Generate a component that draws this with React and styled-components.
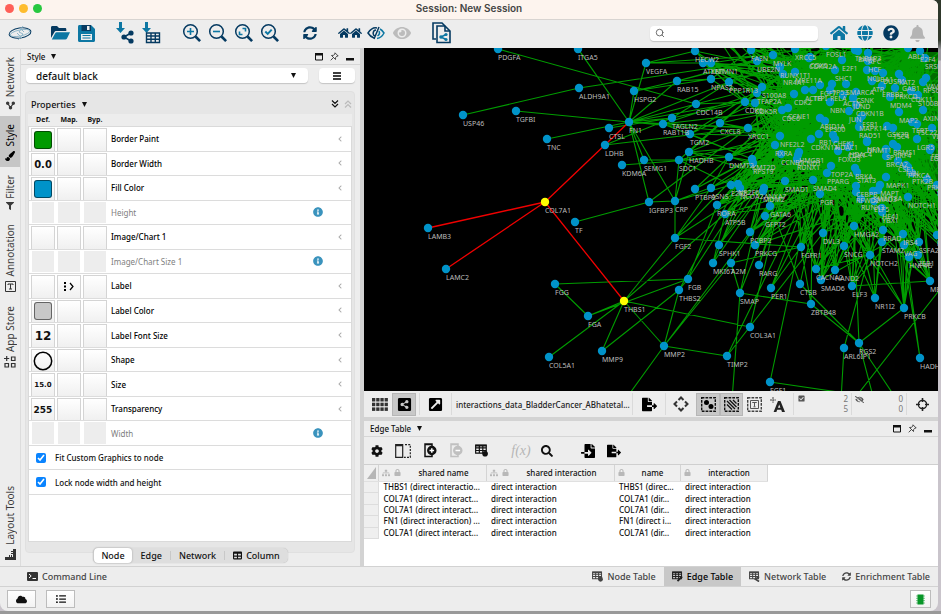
import React from 'react';
import styled, { createGlobalStyle, css } from 'styled-components';
import {
  FaShareAlt, FaTable, FaHome, FaGlobe, FaQuestionCircle, FaBell, FaCloud,
  FaListUl, FaCog, FaEyeSlash, FaEye, FaLock, FaSitemap, FaPaintBrush, FaFilter, FaInfoCircle,
  FaFileExport, FaFileImport, FaSyncAlt, FaShareAltSquare, FaExternalLinkSquareAlt,
  FaCheckSquare, FaSearch, FaChevronLeft,
} from 'react-icons/fa';
import { FiSearch } from 'react-icons/fi';

const NAVY = '#053a61';
const TEAL = '#0d77a3';

const Global = createGlobalStyle`
  * { box-sizing: border-box; }
  body { margin: 0; background: linear-gradient(#2f382b 0 40px, #9c9aa0 50px 60px, #c9c4cb 61px); }
  body, button, input, select { font-family: "Noto Sans", "Open Sans", sans-serif; color: #111; }
  button { border: 0; padding: 0; background: none; display: flex; align-items: center; justify-content: center; }
`;

const Desktop = styled.div`
  height: 100vh;
  padding: 0 3px 3px 0;
  display: flex;
  background: linear-gradient(to top, #999 0 3px, transparent 3px);
`;
const Window = styled.main`
  flex: 1;
  min-width: 0;
  display: flex;
  flex-direction: column;
  background: #ededed;
  border-radius: 0 6px 8px 8px;
  overflow: hidden;
`;
const TitleBar = styled.header`
  height: 20px;
  flex: none;
  display: grid;
  grid-template-columns: 1fr auto 1fr;
  align-items: start;
  background: #fdf4ee;
  border-bottom: 1px solid #d8d4d1;
`;
const Lights = styled.div`
  display: flex;
  gap: 5px;
  padding: 4px 0 0 5px;
`;
const Light = styled.button`
  width: 9px;
  height: 9px;
  border-radius: 50%;
  background: ${(p) => p.$color};
`;
const Title = styled.h1`
  margin: 0;
  font: 600 10px/17px Inter, sans-serif;
  color: #444;
`;
const Toolbar = styled.div`
  height: 28px;
  flex: none;
  display: flex;
  align-items: center;
  gap: 14px;
  padding: 0 8px 2px 7px;
`;
const Group = styled.div`
  display: flex;
`;
const ToolButton = styled.button`
  width: 26px;
  height: 24px;
  color: ${(p) => p.$color || NAVY};
`;
const Search = styled.label`
  display: flex;
  align-items: center;
  width: 168px;
  height: 15px;
  margin-left: auto;
  margin-right: -6px;
  padding: 0 5px;
  border-radius: 4px;
  background: #fff;
  box-shadow: 0 1px 1px #c4c4c4;
  input { flex: 1; min-width: 0; border: 0; outline: 0; background: none; font-size: 9px; height: 13px; }
`;
const Body = styled.div`
  flex: 1;
  min-height: 0;
  display: flex;
`;
const Rail = styled.nav`
  width: 21px;
  flex: none;
  display: flex;
  flex-direction: column;
  border-top: 1px solid #d9d9d9;
  border-right: 1px solid #dcdcdc;
`;
const RailTab = styled.button`
  flex-direction: column-reverse;
  gap: 4px;
  padding: 8px 0 6px;
  font-size: 10px;
  line-height: 14px;
  color: ${(p) => (p.$on ? '#000' : '#3a3a3a')};
  background: ${(p) => (p.$on ? '#c6c6c6' : 'transparent')};
  margin-top: ${(p) => (p.$last ? 'auto' : 0)};
  span { writing-mode: vertical-rl; transform: rotate(180deg); }
`;
const UprightShare = styled(FaShareAlt)`
  transform: rotate(-90deg);
`;
const StylePanel = styled.section`
  width: 339px;
  flex: none;
  display: flex;
  flex-direction: column;
  border-top: 1px solid #d9d9d9;
  padding-bottom: 3px;
`;
const PanelHeader = styled.div`
  height: 16px;
  flex: none;
  display: flex;
  align-items: center;
  gap: 7px;
  padding: 0 6px;
  border-bottom: 1px solid #d6d6d6;
  font-size: 8px;
  font-weight: 500;
  button { gap: 6px; font: inherit; }
  > :first-child { margin-right: auto; }
`;
const Splitter = styled.div`
  flex: none;
  width: 4px;
  background: #d3d3d3;
`;
const StyleRow = styled.div`
  display: flex;
  gap: 11px;
  padding: 3px 5px 8px;
`;
const SelectWrap = styled.label`
  position: relative;
  flex: 1;
  display: flex;
  svg { position: absolute; right: 12px; top: 5px; pointer-events: none; }
`;
const StyleSelect = styled.select`
  appearance: none;
  width: 100%;
  height: 15px;
  border: 0;
  padding: 0 10px;
  border-radius: 4px;
  background: #fff;
  box-shadow: 0 1px 1px #c4c4c4;
  font-size: 10px;
  font-weight: 500;
  line-height: 14px;
`;
const MenuButton = styled.button`
  width: 36px;
  height: 15px;
  border-radius: 4px;
  background: #fff;
  box-shadow: 0 1px 1px #c4c4c4;
`;
const Properties = styled.div`
  flex: 1;
  min-height: 0;
  display: flex;
  flex-direction: column;
  margin: 0 5px 0 4px;
  padding: 0 2px 10px;
  border: 1px solid #e0e0e0;
  border-radius: 4px;
  background: #e6e6e6;
`;
const PropertiesTitle = styled.div`
  height: 22px;
  display: flex;
  align-items: center;
  justify-content: space-between;
  padding: 2px 0 0 3px;
  button { gap: 6px; font-size: 9px; font-weight: 500; }
  > div { display: flex; gap: 5px; }
`;
const ColumnHeads = styled.div`
  height: 12px;
  display: grid;
  grid-template-columns: 26px 26px 26px;
  justify-items: center;
  padding-left: 2px;
  background: #ededed;
  font-size: 7px;
  line-height: 11px;
  font-weight: 700;
`;
const PropertyList = styled.div`
  flex: 1;
  min-height: 0;
  display: grid;
  grid-template-rows: repeat(15, minmax(0, 1fr)) 46px;
  background: #fff;
  border: 1px solid #dadada;
`;
const PropertyRow = styled.div`
  display: grid;
  grid-template-columns: 24px 24px 24px 1fr 22px 14px;
  column-gap: 2px;
  align-items: center;
  padding-left: 2px;
  border-bottom: 1px solid #dcdcdc;
  font-size: 8px;
  font-weight: ${(p) => (p.$off ? 400 : 500)};
  color: ${(p) => (p.$off ? '#808080' : '#000')};
  > span { padding-left: 2px; }
`;
const Cell = styled.button`
  align-self: stretch;
  margin-top: 1px;
  font-family: "DejaVu Sans", sans-serif;
  font-weight: 700;
  font-size: ${(p) => p.$size || 10}px;
  ${(p) => (p.$off
    ? css`background: #ededed; margin: 1px;`
    : css`background: linear-gradient(#fff, #f0f0f0); border: 1px solid #d4d4d4; border-bottom: 0;`)}
`;
const Swatch = styled.i`
  width: 18px;
  height: 18px;
  border-radius: 3px;
  border: 1px solid rgba(0, 0, 0, 0.5);
  background: ${(p) => p.$color};
`;
const Ring = () => (
  <svg width="20" height="20" viewBox="0 0 20 20"><circle cx="10" cy="10" r="8.700" fill="none" stroke="#000" strokeWidth="1.500" /></svg>
);
const CheckRow = styled.label`
  display: flex;
  align-items: center;
  gap: 9px;
  padding-left: 7px;
  border-bottom: 1px solid #dcdcdc;
  font-size: 8px;
  font-weight: 500;
  input { width: 10px; height: 10px; margin: 0; accent-color: #0a84ff; }
`;
const Segments = styled.div`
  align-self: center;
  display: flex;
  align-items: center;
  height: 15px;
  margin-top: -5px;
  border-radius: 5px;
  background: #dedede;
  box-shadow: 0 0 1px #aaa;
`;
const Divider = styled.i`
  width: 1px;
  height: 9px;
  background: #c8c8c8;
`;
const Segment = styled.button`
  gap: 4px;
  padding: 0 7px;
  margin: 0 1px;
  font-size: 9px;
  line-height: 15px;
  font-weight: 500;
  border-radius: 4px;
  background: ${(p) => (p.$on ? '#fff' : 'none')};
  box-shadow: ${(p) => (p.$on ? '0 0 2px #999' : 'none')};
`;
const Main = styled.div`
  flex: 1;
  min-width: 0;
  display: flex;
  flex-direction: column;
`;
const Canvas = styled.svg`
  flex: 1;
  width: 100%;
  min-height: 0;
  display: block;
  background: #000;
  font-family: "Noto Sans", sans-serif;
  font-size: 7px;
  fill: #bcbcbc;
`;
const NetBar = styled.div`
  height: 26px;
  flex: none;
  display: flex;
  align-items: center;
  padding-left: 4px;
  color: #222;
`;
const NetButton = styled.button`
  width: ${(p) => p.$w || 24}px;
  height: 23px;
  margin-left: ${(p) => p.$gap || 0}px;
  color: #222;
  background: ${(p) => (p.$on ? '#c8c8c8' : 'none')};
  border: ${(p) => (p.$on ? '1px solid #b6b6b6' : '0')};
`;
const Sep = styled.i`
  width: 1px;
  height: 22px;
  margin: 0 ${(p) => p.$gap ?? 4}px;
  background: #dadada;
`;
const NetName = styled.span`
  width: 176px;
  font-size: 8px;
  font-weight: 500;
  white-space: nowrap;
`;
const Counter = styled.div`
  display: flex;
  width: ${(p) => p.$w}px;
  justify-content: space-between;
  font-size: 8px;
  line-height: 10px;
  color: #777;
  text-align: right;
  svg { margin-top: 1px; color: #555; }
`;
const TablePanel = styled.section`
  height: 149px;
  flex: none;
  display: flex;
  flex-direction: column;
  border-top: 4px solid #d3d3d3;
`;
const TableTools = styled.div`
  height: 28px;
  flex: none;
  display: flex;
  align-items: center;
  border-bottom: 1px solid #cfcfcf;
`;
const TableArea = styled.div`
  flex: 1;
  background: #fff;
  overflow: hidden;
`;
const Grid = styled.table`
  width: 403px;
  height: 74px;
  table-layout: fixed;
  border-collapse: collapse;
  font-size: 8px;
  line-height: 10px;
  th, td { padding: 0 0 0 5px; text-align: left; white-space: nowrap; font-weight: 500; overflow: hidden; }
  thead th { height: 16px; background: #efefef; border-right: 1px solid #d4d4d4; border-bottom: 1px solid #e0e0e0; padding: 0 3px; }
  tbody td:first-child { background: #efefef; border-bottom: 1px solid #ddd; border-right: 1px solid #ddd; }
`;
const Head = styled.div`
  display: flex;
  align-items: center;
  gap: 4px;
  span { flex: 1; text-align: center; }
  svg { color: #b8b8b8; }
`;
const Tabs = styled.nav`
  height: 21px;
  flex: none;
  display: flex;
  border-top: 1px solid #d2d2d2;
  border-bottom: 1px solid #d2d2d2;
  > :first-child { margin-right: auto; margin-left: 19px; }
`;
const Tab = styled.button`
  gap: 4px;
  padding: 0 8px;
  font-size: 9px;
  font-weight: 500;
  color: ${(p) => (p.$on ? '#000' : '#444')};
  background: ${(p) => (p.$on ? '#c8c8c8' : 'none')};
`;
const Status = styled.footer`
  height: 24px;
  flex: none;
  display: flex;
  align-items: center;
  gap: 10px;
  padding: 0 7px;
  > :last-child { margin-left: auto; width: 21px; }
`;
const StatusButton = styled.button`
  width: 29px;
  height: 18px;
  border: 1px solid #bcbcbc;
  background: linear-gradient(#fff, #f3f3f3);
`;

/* ---------- icons ---------- */
const Logo = () => (
  <svg width="24" height="16" viewBox="0 0 24 16" fill="none">
    <ellipse cx="12" cy="8" rx="11" ry="5" transform="rotate(-8 12 8)" stroke={NAVY} />
    <ellipse cx="12" cy="8" rx="10" ry="3" transform="rotate(-12 12 8)" stroke="#6fa3bd" strokeWidth=".7" />
    <path d="M15 1l-4 6 4 2-5 6M12 3l4 4M9 8l5 5" stroke="#8fb6c9" strokeWidth="1" />
  </svg>
);
const FolderIcon = () => (
  <svg width="19" height="16" viewBox="0 0 19 16">
    <path d="M0 13V2.500C0 1.500.6 1 1.500 1H6l2 2h6c.8 0 1.300.5 1.300 1.300V6H5.500C4.400 6 3.700 6.500 3.200 7.400z" fill={NAVY} />
    <path d="M5.800 7.200H19l-3 6.200c-.4.7-.9 1.100-1.700 1.100H.8L4 8.400c.4-.8 1-1.200 1.800-1.200z" fill={TEAL} />
  </svg>
);
const SaveIcon = () => (
  <svg width="17" height="17" viewBox="0 0 17 17">
    <path d="M1.500 0H13l4 4v11.500c0 .9-.6 1.500-1.500 1.500h-14C.6 17 0 16.400 0 15.500v-14C0 .6.6 0 1.500 0z" fill={TEAL} />
    <path d="M3.500 0H13v6H3.500z" fill={NAVY} />
    <path d="M9 1h2.500v4H9zM3 9h11v6H3z" fill="#ededed" />
    <path d="M4.500 10.500h8M4.500 13h8" stroke={TEAL} />
  </svg>
);
const Zoom = ({ children }) => (
  <svg width="20" height="20" viewBox="0 0 20 20" fill="none" stroke={NAVY}>
    <circle cx="8.5" cy="8.5" r="6.8" strokeWidth="1.5" />
    <path d="M13.5 13.5l4.6 4.6" strokeWidth="2.6" />
    <g stroke={TEAL} strokeWidth="1.6">{children}</g>
  </svg>
);
const ImportIcon = ({ children }) => (
  <svg width="22" height="22" viewBox="0 0 22 22">
    <path d="M4 0h3v6h3L5.500 11 1 6h3z" fill={TEAL} />
    {children}
  </svg>
);
const Docs = () => (
  <svg width="20" height="22" viewBox="0 0 20 22" fill="#ededed" stroke={NAVY} strokeWidth="1.6">
    <path d="M4 17H1V1h9l3 3" />
    <path d="M5 4h8l5 5v11.500H5z" />
    <path d="M13 4v5h5" fill="none" />
    <path d="M9 15l5-2.500M9 15l5 2.500" stroke={TEAL} />
    <g fill={TEAL} stroke="none"><circle cx="9" cy="15" r="1.800" /><circle cx="14" cy="12.500" r="1.600" /><circle cx="14" cy="17.500" r="1.600" /></g>
  </svg>
);
const HalfEye = () => (
  <svg width="18" height="14" viewBox="0 0 18 14" fill="none" stroke={NAVY} strokeWidth="1.500">
    <path d="M10 2C6 1 3 4 1 7c1.500 2.500 3 4 6 5M12 1L7 13M9 4C6 4 5 9 8 10" />
    <path d="M13 3c2 1 3 2.500 4 4-1.500 3-4 5-7 5.500M12 5c1 2 0 4-1.500 5" stroke={TEAL} />
  </svg>
);
const Caret = ({ size = 5 }) => (
  <svg width={size} height={size} viewBox="0 0 6 6"><path d="M0 0h6L3 6z" fill="#111" /></svg>
);
const MenuIcon = () => (
  <svg width="8" height="8" viewBox="0 0 8 8"><path d="M0 1h8M0 4h8M0 7h8" stroke="#000" strokeWidth="1.600" /></svg>
);
const MaxIcon = () => (
  <svg width="8" height="8" viewBox="0 0 8 8"><path d="M.5 1v6h7V1z" fill="none" stroke="#111" /><path d="M0 0h8v2.500H0z" fill="#111" /></svg>
);
const PinIcon = () => (
  <svg width="9" height="9" viewBox="0 0 9 9" fill="none" stroke="#222" strokeWidth=".8"><path d="M5 .8L8.200 4 6.800 4.200 5.600 5.600 5.500 7.500 1.500 3.500 3.400 3.300 4.800 2.200zM3.300 5.700L.7 8.300" /></svg>
);
const MinIcon = () => (
  <svg width="8" height="8" viewBox="0 0 8 8"><path d="M0 5h8v2.500H0z" fill="#111" /></svg>
);
const PanelButtons = () => (
  <>
    <button aria-label="Float"><MaxIcon /></button>
    <button aria-label="Pin"><PinIcon /></button>
    <button aria-label="Minimize"><MinIcon /></button>
  </>
);
const DoubleChevron = ({ up, color }) => (
  <svg width="8" height="8" viewBox="0 0 8 8" fill="none" stroke={color} strokeWidth="1.200">
    <path d={up ? 'M1 4l3-3 3 3M1 7.500l3-3 3 3' : 'M1 .5l3 3 3-3M1 4l3 3 3-3'} />
  </svg>
);
const AnnotIcon = () => (
  <svg width="11" height="11" viewBox="0 0 11 11" fill="none" stroke="#333"><path d="M.5.5h10v10H.5zM3 4V3h5v1M5.500 3v5M4 8h3" /></svg>
);
const AppsIcon = () => (
  <svg width="12" height="12" viewBox="0 0 12 12" fill="none" stroke="#333" strokeWidth="1.200"><path d="M1 7.500h3.500V11H1zM7.500 7.500H11V11H7.500zM7.500 1H11v3.500H7.500zM2.700 0v5M0 2.500h5.200" /></svg>
);
const RulerIcon = () => (
  <svg width="11" height="11" viewBox="0 0 11 11" fill="#333"><path d="M0 8h8V0h3v11H0zM4 6h1v2H4zM6 6h1v2H6zM6 2h2v1H6zM6 4h2v1H6z" /></svg>
);
const MapIcon = () => (
  <svg width="10" height="9" viewBox="0 0 10 9"><path d="M0 0h2v2H0zM0 3.500h2v2H0zM0 7h2v2H0z" /><path d="M6 1l3 3.500L6 8" fill="none" stroke="#000" strokeWidth="1.200" /></svg>
);
const GridIcon = () => (
  <svg width="16" height="13" viewBox="0 0 16 13" fill="#333">
    {[0, 1, 2].flatMap((r) => [0, 1, 2, 3].map((c) => <rect key={`${r}${c}`} x={c * 4.200} y={r * 4.700} width="3.300" height="3.500" />))}
  </svg>
);
const Dashed = ({ children, color = '#111' }) => (
  <svg width="15" height="15" viewBox="0 0 15 15">
    <rect x=".7" y=".7" width="13.600" height="13.600" fill="none" stroke={color} strokeWidth="1.400" strokeDasharray="2.700 1.100" />
    {children}
  </svg>
);
const CrossIcon = () => (
  <svg width="16" height="16" viewBox="0 0 16 16" fill="none" stroke="#333" strokeWidth="2"><path d="M5.500 4L8 1.500 10.500 4M5.500 12L8 14.500l2.500-2.500M4 5.500L1.500 8 4 10.500M12 5.500L14.500 8 12 10.500" /></svg>
);
const TargetIcon = () => (
  <svg width="13" height="13" viewBox="0 0 13 13" fill="none" stroke="#222" strokeWidth="1.200"><circle cx="6.500" cy="6.500" r="4.200" /><path d="M6.500 0v4M6.500 9v4M0 6.500h4M9 6.500h4" strokeWidth="1.600" /></svg>
);
const MoveA = () => (
  <svg width="15" height="15" viewBox="0 0 15 15" fill="#222"><path d="M3 0v6M0 3h6" stroke="#444" strokeDasharray="2 .6" /><path fillRule="evenodd" d="M8 4h2.500L15 15h-3l-.8-2.200H7.200L6.400 15H3.600zM9.200 7.500L8 10.800h2.400z" /></svg>
);
const SplitIcon = () => (
  <svg width="16" height="14" viewBox="0 0 16 14" fill="none" stroke="#222"><path d="M.7.7h7v12.600h-7z" strokeWidth="1.200" /><path d="M.7 1.500h7" strokeWidth="1.500" /><path d="M10 .7h5.300v12.600H9" strokeDasharray="2 1.200" strokeWidth="1.200" /></svg>
);
const ColumnIcon = ({ minus, color = '#111' }) => (
  <svg width="14" height="15" viewBox="0 0 14 15" fill="none" stroke={color} strokeWidth="1.500">
    <path d="M9 3V1H2v12.500h7V12M2 1.500h7" /><circle cx="8.800" cy="7.500" r="4" fill={color} />
    <path d={minus ? 'M6.500 7.500h4.600' : 'M6.500 7.500h4.600M8.800 5.200v4.600'} stroke="#fff" />
  </svg>
);
const TableX = ({ size = 11, color = '#222', mark }) => (
  <svg width={size} height={size} viewBox="0 0 12 12" fill="none" stroke={color}>
    <path d="M.6 1h9.800v7.500H.6zM.6 3.500h9.800M.6 6h9.800M4 1v7.500M7.200 1v7.500" strokeWidth="1.100" />
    <path d="M.5 1.500h10" strokeWidth="1.600" />
    {mark === 'dot' && <circle cx="9.300" cy="9" r="2.600" fill={color} stroke="none" />}
    {mark === 'line' && <path d="M6 11l5-5" strokeWidth="2" />}
    {mark === 'net' && <path d="M11 6L7 9l4 2.500" strokeWidth="1.800" />}
  </svg>
);
const TerminalIcon = () => (
  <svg width="11" height="9" viewBox="0 0 11 9"><rect width="11" height="9" rx="1" fill="#333" /><path d="M2 2l2.200 2L2 6M5.500 6.500H9" fill="none" stroke="#fff" /></svg>
);
const Chip = () => (
  <svg width="9" height="11" viewBox="0 0 9 11"><path d="M0 2h9M0 4.300h9M0 6.600h9M0 9h9" stroke="#7cc48c" /><rect x="1.500" y=".5" width="6" height="10" fill="#079628" /></svg>
);
const Formula = styled.em`
  font: italic 14px/16px "Liberation Serif", serif;
  color: #b5b5b5;
`;

/* ---------- network ---------- */
const ORIGIN = { x: 364, y: 48 };
const parse = (s) => s.trim().split(/\s+/).map((t) => {
  const [name, x, y] = t.split(',');
  return { name, x: +x, y: +y };
});
const OUTER = parse(`PDGFA,498,49 ITGA5,578,49 ALDH9A1,579,88 USP46,463,115 TGFBI,516,111 VEGFA,646,63 RAB15,677,81
HSPG2,634,91 NPAS2,711,79 CDC14B,696,104 TAGLN2,672,118 RAB11B,663,124 FN1,629,122 PPP1R13,729,82 HECW2,695,51
TNC,547,139 CTSL,609,128 LDHB,605,145 KDM6A,622,165 SEMG1,644,160 COL7A1,545,202 TF,575,222 LAMB3,428,228
LAMC2,446,269 FGG,555,284 FGA,588,316 THBS1,624,301 COL5A1,549,357 MMP9,602,351 MKI67,713,263 A2M,731,263
RARG,759,265 FGB,688,279 THBS2,679,290 SMAP,740,293 PER1,771,288 CTSB,800,284 ZBTB48,811,304 COL3A1,750,327
MMP2,664,346 TIMP2,727,356 FGF1,770,382 ARL6IP1,844,348 RGS2,859,343 HADH,920,358 TGM2,690,134 CXCL8,720,123
HADHB,689,152 SDC1,679,160 IGFBP3,649,202 CRP,675,201 FGF2,675,238 SPHK1,719,245 PTBP2,695,189 ASNS,711,188`);
const MIDDLE = parse(`ATXN1,703,63 LETMN1,711,63 FASN,751,50 MYLK,773,55 UBE2N,757,61 XRCC1,748,128 DNMT2,729,157 KMT2D,752,159
RPS19,753,163 RORA,717,205 ATP5B,725,214 E2F2,731,185 NR2F6,738,184 NCOA2,740,188 MDM2,763,191 ANXA7,764,188
GATA6,770,206 GFPT2,765,216 PCBP2,750,232 PRKCG,755,245 FGFR1,801,247 DVL3,823,233 PGR,820,194 SMAD1,785,181
SMAD4,813,180 HMGA2,854,226 SNCG,844,246 NOTCH2,870,255 RRAD,883,230 STAM2,882,242 IRS4,903,234 VAG,904,245
SSFA2,919,242 HNF4G,909,257 ZEB1,918,255 CACNA2,816,269 SMAD6,821,280 HAND2,835,270 ELF3,852,286 NR1I2,875,298
PRKCB,904,308 MED4,930,281 NOTCH1,908,197 HE41,882,208 YBX1,882,212 CDK6,745,102 S100A8,762,87 TFAP2A,757,93
RUNX3,861,199 ELF5,874,201 PER2,937,235`);
const CORE = parse(`RUNX1T1,780,67 NR4A1,783,74 MRE11A,795,72 XRCC5,795,49 COX5,810,57 CDKN2A,809,58 FOSL1,826,46 E2F1,842,60
SHC1,835,70 THRAP3,855,50 APC,868,53 HCF,868,61 BAP1,858,51 NCL,867,70 UBA1,875,71 DUSP1,883,73 KAT2,899,74 ABL1,908,48
E2F4,920,51 SRSF,925,58 VAV,926,78 RPS6,923,82 ATR,872,81 ERBB2,882,86 GAB1,902,80 PRKCD,895,88 CDK11,911,91
S100B,918,95 MDM4,890,97 MAP2,899,112 AXIN,923,110 CDK2,794,94 ACTB,805,90 TFPI,813,90 FGF7,820,85 TP53,832,84
RELA,830,90 SMARCA,846,84 CSNK,856,92 ACTN,843,95 JUND,853,98 CDKN1B,856,105 NBN,830,102 CDC6,782,110 CCNE1,788,108 CDK5R,755,103
JUN,849,111 ESR1,862,116 ARID1A,820,118 EP300,825,121 MAPK14,859,120 GSK3B,887,126 TERT,912,122 TSC22,917,124
VIM,932,128 TSC4,893,128 NFE2L2,780,136 RXRA,775,145 CDKN1A,811,139 RB1,819,134 CHEK1,833,135 HDAC1,835,139 RAD51,859,127
CDK1,848,147 NF1,867,141 DNMT1,867,142 BRMS1,893,144 SP1,886,149 IRF4,897,147 LGR5,917,139 LGALS,930,150 CCND1,798,155
CCNB1,781,154 FOXO3,838,151 HDAC4,849,146 RUNX1,797,159 HMGB1,799,152 TOP2A,831,166 PPARG,827,173 BRKA,855,168 STAT3,857,172
BRCA2,886,156 CSF1,898,161 PRKCA,908,167 FYN,906,165 PTK2B,912,173 CEBPB,856,186 RFWD2,856,192 MAPK1,886,177 MAPT,880,185
WNT8A,878,190 SMAD3,873,191 PRKG1,927,179 FBXW7,931,148 NOTCH3,937,185`);
const NODES = [...OUTER, ...MIDDLE, ...CORE];
const byName = Object.fromEntries(NODES.map((n) => [n.name, n]));

const LINKS = `USP46-ALDH9A1 ALDH9A1-UBE2N TGFBI-FN1 PDGFA-CDC14B ITGA5-FN1 TNC-FN1 LDHB-XRCC1 CTSL-TAGLN2 KDM6A-DNMT2
FN1-IGFBP3 FN1-SEMG1 FN1-HSPG2 FN1-CRP TF-IGFBP3 VEGFA-HECW2 VEGFA-MYLK FGG-FGB FGG-FGA FGA-THBS1 FGA-FGB COL5A1-THBS1 MMP9-THBS1
MMP9-THBS2 THBS1-FGF2 THBS1-COL3A1 THBS1-MMP2 MMP2-TIMP2 MMP2-THBS2 MMP2-A2M SMAP-ZBTB48 SMAP-A2M SMAP-MDM2
FGB-THBS2 FGB-RORA MKI67-ATP5B A2M-FGFR1 FGF2-CRP FGF2-ASNS FGF2-FGFR1 CRP-SDC1 CRP-E2F2 SDC1-CXCL8 SEMG1-SDC1 SDC1-DNMT2
RGS2-PRKCB RGS2-CTSB RGS2-ZBTB48 ARL6IP1-HE41 HADH-IRS4 FN1-TAGLN2 FN1-RAB11B FN1-VEGFA FN1-PPP1R13 FN1-CDC14B
TGM2-CDK5R HADHB-XRCC1 RAB11B-CDC6 TAGLN2-CDK6 RAB15-NPAS2 HSPG2-RAB15 CXCL8-S100A8 SPHK1-MDM2 RARG-SMAD1
PER1-FGFR1 CTSB-ANXA7 COL3A1-SMAD1 TIMP2-SMAD4 FGF1-SMAD4 PTBP2-KMT2D ASNS-RXRA LDHB-TAGLN2 RGS2-HMGA2
CDC14B-S100A8 CDC14B-CDK6 NPAS2-FASN RAB15-MYLK HADHB-RXRA TGM2-NFE2L2 SDC1-NFE2L2 RAB11B-TFAP2A
THBS2-KMT2D FGB-RXRA MKI67-RPS19 MKI67-MDM2 THBS1-ATP5B MMP2-PCBP2 TIMP2-DVL3 SMAP-SMAD1 PER1-PGR PER1-SMAD4 CTSB-PGR
ZBTB48-SMAD4 ZBTB48-FGFR1 SPHK1-RXRA SPHK1-CCNB1 FGF2-KMT2D A2M-SMAD1 RARG-CCND1 CRP-HADHB IGFBP3-CRP
RAB15-UBE2N VEGFA-ATXN1 HECW2-MRE11A HECW2-CDK6 NPAS2-MRE11A PPP1R13-CDK2 PPP1R13-RUNX1T1 NPAS2-CDK6 CXCL8-NFE2L2
CXCL8-CDC6 CXCL8-CDKN1A TGM2-S100A8 TAGLN2-MYLK HADHB-CDK6 PTBP2-RXRA PTBP2-DNMT2 ASNS-DNMT2 ASNS-CCNB1 HADHB-DNMT2
HADHB-SMAD1 DNMT2-SMAD4 RAB11B-KMT2D TGM2-KMT2D RAB11B-XRCC1 XRCC1-CDKN1A HECW2-TFAP2A ATXN1-CDC6 LETMN1-CCNE1
CRP-CCND1 FGF2-RUNX1 IGFBP3-XRCC1 HSPG2-NPAS2 SDC1-E2F2 FN1-NFE2L2 FN1-ACTB FN1-RAB15 ELF3-MED4 SMAD6-IRS4 CACNA2-NOTCH2`
  .trim().split(/\s+/).map((l) => l.split('-').map((n) => byName[n]));
const RAYS = [[565, 30, 629, 122], [664, 346, 625, 400], [740, 293, 732, 400], [770, 382, 845, 393], [844, 348, 841, 400],
  [859, 343, 874, 400], [859, 343, 897, 400], [858, 394, 945, 283], [629, 122, 760, 128], [920, 358, 901, 240]];
const SELECTED = [['COL7A1', 'FN1'], ['COL7A1', 'LAMB3'], ['COL7A1', 'LAMC2'], ['COL7A1', 'THBS1']];
const HIGHLIGHTED = new Set(['COL7A1', 'THBS1']);

const seeded = (seed) => () => {
  seed = (seed * 1664525 + 1013904223) % 4294967296;
  return seed / 4294967296;
};
const rand = seeded(17);
const pick = (list) => list[Math.floor(rand() * list.length)];
const DENSE = [];
MIDDLE.forEach((n) => { for (let i = 0; i < 9; i += 1) DENSE.push([n, pick(CORE)]); });
CORE.forEach((n) => { for (let i = 0; i < 12; i += 1) DENSE.push([n, pick(CORE)]); });
for (let i = 0; i < 60; i += 1) DENSE.push([{ x: 690 + rand() * 250, y: 30 }, pick(CORE)]);
for (let i = 0; i < 110; i += 1) DENSE.push([{ x: 945, y: 40 + rand() * 210 }, pick(CORE)]);
const line = (a, b) => `M${Math.round(a.x)} ${Math.round(a.y)}L${Math.round(b.x)} ${Math.round(b.y)}`;
const edgePath = [...LINKS, ...DENSE].map(([a, b]) => line(a, b)).join('')
  + RAYS.map(([a, b, c, d]) => `M${a} ${b}L${c} ${d}`).join('');
const redPath = SELECTED.map(([a, b]) => line(byName[a], byName[b])).join('');

const Network = () => (
  <Canvas role="img" aria-label="Interaction network">
    <g transform={`translate(${-ORIGIN.x} ${-ORIGIN.y})`}>
      <path d="M815 75L850 52H940V185L890 170 840 155 812 125z" fill="#009900" opacity=".7" />
      <path d={edgePath} stroke="#009c00" strokeWidth="1.100" fill="none" />
      <path d={redPath} stroke="#f00000" strokeWidth="1.300" fill="none" />
      {NODES.map((n) => (
        <circle key={n.name} cx={n.x} cy={n.y} r="4.200" fill={HIGHLIGHTED.has(n.name) ? '#ffff00' : '#0093c9'} />
      ))}
      {NODES.map((n) => <text key={n.name} x={n.x} y={n.y + 11}>{n.name}</text>)}
    </g>
  </Canvas>
);

/* ---------- data ---------- */
const PROPERTIES = [
  { label: 'Border Paint', swatch: '#009a00' },
  { label: 'Border Width', value: '0.0', size: 10 },
  { label: 'Fill Color', swatch: '#0093c9' },
  { label: 'Height', off: true },
  { label: 'Image/Chart 1' },
  { label: 'Image/Chart Size 1', off: true },
  { label: 'Label', mapped: true },
  { label: 'Label Color', swatch: '#c8c8c8' },
  { label: 'Label Font Size', value: '12', size: 12 },
  { label: 'Shape', ring: true },
  { label: 'Size', value: '15.0', size: 7 },
  { label: 'Transparency', value: '255', size: 9 },
  { label: 'Width', off: true },
];
const ROWS = [
  ['THBS1 (direct interactio...', 'THBS1 (direc...'],
  ['COL7A1 (direct interact...', 'COL7A1 (dir...'],
  ['COL7A1 (direct interact...', 'COL7A1 (dir...'],
  ['FN1 (direct interaction) ...', 'FN1 (direct i...'],
  ['COL7A1 (direct interact...', 'COL7A1 (dir...'],
];
const HEADS = [['shared name', true], ['shared interaction', true], ['name', false], ['interaction', false]];

const Property = ({ p }) => (
  <PropertyRow $off={p.off}>
    <Cell $off={p.off} $size={p.size} aria-label={`${p.label} default`}>
      {p.swatch && <Swatch $color={p.swatch} />}
      {p.ring && <Ring />}
      {p.value}
    </Cell>
    <Cell $off={p.off} aria-label={`${p.label} mapping`}>{p.mapped && <MapIcon />}</Cell>
    <Cell $off={p.off} aria-label={`${p.label} bypass`} />
    <span>{p.label}</span>
    {p.off ? <FaInfoCircle size={10} color="#3a93bd" /> : <i />}
    {!p.off && <FaChevronLeft size={6} color="#aaa" />}
  </PropertyRow>
);

export default function App() {
  return (
    <Desktop>
      <Global />
      <Window>
        <TitleBar>
          <Lights>
            <Light $color="#ff5f57" aria-label="Close" />
            <Light $color="#febc2e" aria-label="Minimize window" />
            <Light $color="#28c840" aria-label="Zoom window" />
          </Lights>
          <Title>Session: New Session</Title>
        </TitleBar>
        <Toolbar>
          <ToolButton aria-label="Home page"><Logo /></ToolButton>
          <Group>
            <ToolButton aria-label="Open"><FolderIcon /></ToolButton>
            <ToolButton aria-label="Save"><SaveIcon /></ToolButton>
          </Group>
          <Group>
            <ToolButton aria-label="Import network">
              <ImportIcon><g fill={NAVY}><circle cx="9" cy="15" r="2.600" /><circle cx="16" cy="11" r="2.600" /><circle cx="16" cy="19" r="2.600" /><path d="M16 11L9 15l7 4" fill="none" stroke={NAVY} strokeWidth="1.600" /></g></ImportIcon>
            </ToolButton>
            <ToolButton aria-label="Import table">
              <ImportIcon><path d="M5.500 11h13v9.500h-13zM5.500 14h13M5.500 17.200h13M10 11v9.500M14.300 11v9.500" fill="none" stroke={NAVY} strokeWidth="1.400" /></ImportIcon>
            </ToolButton>
          </Group>
          <Group>
            <ToolButton aria-label="Zoom in"><Zoom><path d="M5 8.500h7M8.500 5v7" /></Zoom></ToolButton>
            <ToolButton aria-label="Zoom out"><Zoom><path d="M5 8.500h7" /></Zoom></ToolButton>
            <ToolButton aria-label="Fit"><Zoom><path d="M8.500 5.500h3v3M8.500 11.500h-3v-3" /></Zoom></ToolButton>
            <ToolButton aria-label="Zoom selected"><Zoom><path d="M5.300 8.500l2.400 2.400 4-4.300" strokeWidth="2" /></Zoom></ToolButton>
          </Group>
          <ToolButton aria-label="Refresh"><FaSyncAlt size={14} /></ToolButton>
          <Group>
            <ToolButton aria-label="First neighbors"><FaHome size={12} /><FaHome size={12} /></ToolButton>
            <ToolButton aria-label="Hide selected"><HalfEye /></ToolButton>
            <ToolButton aria-label="Show all" $color="#bcbcbc"><FaEye size={18} /></ToolButton>
          </Group>
          <ToolButton aria-label="New network from selection"><Docs /></ToolButton>
          <Search>
            <FiSearch size={10} color="#555" />
            <input aria-label="Search" />
          </Search>
          <Group>
            <ToolButton aria-label="Home" $color={TEAL}><FaHome size={18} /></ToolButton>
            <ToolButton aria-label="Web" $color={TEAL}><FaGlobe size={16} /></ToolButton>
            <ToolButton aria-label="Help"><FaQuestionCircle size={16} /></ToolButton>
            <ToolButton aria-label="Notifications" $color="#b4b4b4"><FaBell size={17} /></ToolButton>
          </Group>
        </Toolbar>
        <Body>
          <Rail>
            <RailTab><UprightShare size={9} /><span>Network</span></RailTab>
            <RailTab $on><FaPaintBrush size={10} /><span>Style</span></RailTab>
            <RailTab><FaFilter size={8} /><span>Filter</span></RailTab>
            <RailTab><AnnotIcon /><span>Annotation</span></RailTab>
            <RailTab><AppsIcon /><span>App Store</span></RailTab>
            <RailTab $last><RulerIcon /><span>Layout Tools</span></RailTab>
          </Rail>
          <StylePanel>
            <PanelHeader>
              <button>Style <Caret /></button>
              <PanelButtons />
            </PanelHeader>
            <StyleRow>
              <SelectWrap>
                <StyleSelect aria-label="Current style"><option>default black</option></StyleSelect>
                <Caret />
              </SelectWrap>
              <MenuButton aria-label="Style options"><MenuIcon /></MenuButton>
            </StyleRow>
            <Properties>
              <PropertiesTitle>
                <button>Properties <Caret /></button>
                <div>
                  <button aria-label="Expand all"><DoubleChevron color="#111" /></button>
                  <button aria-label="Collapse all"><DoubleChevron up color="#bbb" /></button>
                </div>
              </PropertiesTitle>
              <ColumnHeads><span>Def.</span><span>Map.</span><span>Byp.</span></ColumnHeads>
              <PropertyList>
                {PROPERTIES.map((p) => <Property key={p.label} p={p} />)}
                <CheckRow><input type="checkbox" defaultChecked />Fit Custom Graphics to node</CheckRow>
                <CheckRow><input type="checkbox" defaultChecked />Lock node width and height</CheckRow>
              </PropertyList>
            </Properties>
            <Segments>
              <Segment $on>Node</Segment>
              <Segment>Edge</Segment>
              <Divider />
              <Segment>Network</Segment>
              <Divider />
              <Segment><FaTable size={9} />Column</Segment>
            </Segments>
          </StylePanel>
          <Splitter />
          <Main>
            <Network />
            <NetBar>
              <NetButton aria-label="Grid view"><GridIcon /></NetButton>
              <NetButton $on aria-label="Network view"><FaShareAltSquare size={15} color="#000" /></NetButton>
              <Sep $gap={3} />
              <NetButton aria-label="Detach view"><FaExternalLinkSquareAlt size={15} color="#000" /></NetButton>
              <Sep />
              <NetName>interactions_data_BladderCancer_ABhatetal...</NetName>
              <Sep $gap={0} />
              <NetButton $w={32} aria-label="Export"><FaFileExport size={15} color="#000" /></NetButton>
              <Sep $gap={0} />
              <NetButton $w={30} aria-label="Always show tools"><CrossIcon /></NetButton>
              <NetButton $on aria-label="Select nodes"><Dashed><circle cx="5.500" cy="5.500" r="2.500" /><circle cx="10" cy="9.500" r="2.500" /></Dashed></NetButton>
              <NetButton $w={23} $on aria-label="Select edges"><Dashed><path d="M3 4l8 8M3 7.500l5 5M5.500 3l7 7M9 3l3.500 3.500" stroke="#111" strokeWidth="1.300" /></Dashed></NetButton>
              <NetButton $w={23} aria-label="Select annotations"><Dashed color="#444"><path d="M3.500 3.500h8v8h-8zM5.500 6V5.500h4V6M7.500 5.500v4M6.500 9.800h2" fill="none" stroke="#555" /></Dashed></NetButton>
              <NetButton $w={23} aria-label="Move labels"><MoveA /></NetButton>
              <Sep />
              <Counter $w={50}><FaCheckSquare size={7} /><span>2<br />5</span></Counter>
              <Sep $gap={3} />
              <Counter $w={48}><FaEyeSlash size={9} /><span>0<br />0</span></Counter>
              <Sep $gap={3} />
              <NetButton aria-label="Birds eye view"><TargetIcon /></NetButton>
            </NetBar>
            <TablePanel>
              <PanelHeader>
                <button>Edge Table <Caret /></button>
                <PanelButtons />
              </PanelHeader>
              <TableTools>
                <NetButton $w={26} aria-label="Settings"><FaCog size={12} color="#111" /></NetButton>
                <NetButton $w={26} aria-label="Columns"><SplitIcon /></NetButton>
                <NetButton $w={28} aria-label="Add column"><ColumnIcon /></NetButton>
                <NetButton $w={24} aria-label="Delete column"><ColumnIcon minus color="#c0c0c0" /></NetButton>
                <NetButton $w={26} aria-label="Delete table"><TableX size={13} color="#111" mark="dot" /></NetButton>
                <NetButton $w={22} $gap={16} aria-label="Function builder"><Formula>f(x)</Formula></NetButton>
                <NetButton $w={26} $gap={2} aria-label="Find"><FaSearch size={12} color="#111" /></NetButton>
                <NetButton $w={26} $gap={15} aria-label="Import table"><FaFileImport size={14} color="#000" /></NetButton>
                <NetButton $w={26} aria-label="Export table"><FaFileExport size={14} color="#000" /></NetButton>
              </TableTools>
              <TableArea>
                <Grid>
                  <colgroup><col width="14" /><col width="108" /><col width="128" /><col width="66" /><col width="87" /></colgroup>
                  <thead>
                    <tr>
                      <th><svg width="9" height="12" viewBox="0 0 9 12" display="block"><path d="M9 0v12H0z" fill="#b5b5b5" /></svg></th>
                      {HEADS.map(([h, shared]) => (
                        <th key={h}><Head>{shared && <FaSitemap size={8} />}<FaLock size={7} /><span>{h}</span></Head></th>
                      ))}
                    </tr>
                  </thead>
                  <tbody>
                    {ROWS.map(([a, c], i) => (
                      <tr key={i}><td /><td>{a}</td><td>direct interaction</td><td>{c}</td><td>direct interaction</td></tr>
                    ))}
                  </tbody>
                </Grid>
              </TableArea>
            </TablePanel>
          </Main>
        </Body>
        <Tabs>
          <Tab><TerminalIcon />Command Line</Tab>
          <Tab><TableX color="#444" mark="dot" />Node Table</Tab>
          <Tab $on><TableX mark="line" />Edge Table</Tab>
          <Tab><TableX color="#444" mark="net" />Network Table</Tab>
          <Tab><FaSyncAlt size={9} />Enrichment Table</Tab>
        </Tabs>
        <Status>
          <StatusButton aria-label="Cloud"><FaCloud size={11} /></StatusButton>
          <StatusButton aria-label="Tasks"><FaListUl size={10} /></StatusButton>
          <StatusButton aria-label="Memory"><Chip /></StatusButton>
        </Status>
      </Window>
    </Desktop>
  );
}
